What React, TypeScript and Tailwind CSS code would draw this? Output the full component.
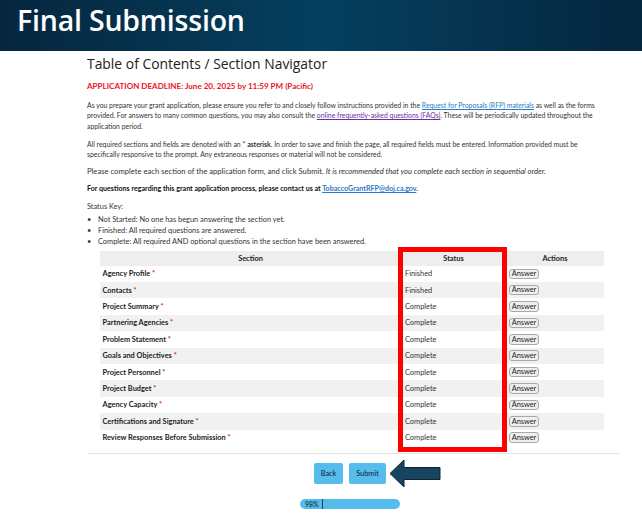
const SECTIONS = [
  { name: "Agency Profile", status: "Finished" },
  { name: "Contacts", status: "Finished" },
  { name: "Project Summary", status: "Complete" },
  { name: "Partnering Agencies", status: "Complete" },
  { name: "Problem Statement", status: "Complete" },
  { name: "Goals and Objectives", status: "Complete" },
  { name: "Project Personnel", status: "Complete" },
  { name: "Project Budget", status: "Complete" },
  { name: "Agency Capacity", status: "Complete" },
  { name: "Certifications and Signature", status: "Complete" },
  { name: "Review Responses Before Submission", status: "Complete" },
];

export default function App() {
  return (
    <div className="relative w-[642px] h-[513px] overflow-hidden bg-white font-['Lato','Liberation_Sans',sans-serif] text-[#222]">
      {/* Slide banner */}
      <header className="h-[51px] bg-gradient-to-r from-[#06263f] via-[#04405f] to-[#05263f] pl-[17px] flex items-center">
        <h1 className="font-['Open_Sans',sans-serif] text-[28.5px] font-semibold leading-none text-white tracking-[-0.2px] pb-[11px]">
          Final Submission
        </h1>
      </header>

      <main className="pl-[87px] pr-[22px]">
        <h2 className="font-['Open_Sans',sans-serif] text-[13.9px] leading-[20px] text-[#222] mt-[3px]">
          Table of Contents / Section Navigator
        </h2>
        <p className="mt-[6px] text-[8.05px] leading-[12px] font-bold text-[#e8141c]">
          APPLICATION DEADLINE: June 20, 2025 by 11:59 PM (Pacific)
        </p>

        <div className="text-[#333]">
          <div className="text-[6.87px] leading-[10.3px]">
            <p className="mt-[8px] w-[520px]">
              As you prepare your grant application, please ensure you refer to and closely follow instructions provided in the{" "}
              <a className="text-[#2a78c8] underline">Request for Proposals (RFP) materials</a> as well as the forms provided. For answers to many common questions, you may also consult the{" "}
              <a className="text-[#6b2fa0] underline">online frequently-asked questions (FAQs)</a>. These will be periodically updated throughout the application period.
            </p>
            <p className="mt-[8px] w-[520px]">
              All required sections and fields are denoted with an * <b>asterisk</b>. In order to save and finish the page, all required fields must be entered. Information provided must be specifically responsive to the prompt. Any extraneous responses or material will not be considered.
            </p>
          </div>
          <p className="mt-[7px] text-[7.65px] leading-[10.5px]">
            Please complete each section of the application form, and click Submit. <i>It is recommended that you complete each section in sequential order.</i>
          </p>
          <p className="mt-[7px] text-[7.1px] leading-[10.5px]">
            <b className="text-[#111]">For questions regarding this grant application process, please contact us at </b>
            <a className="text-[#2a78c8] underline font-bold">TobaccoGrantRFP@doj.ca.gov</a>
            <b>.</b>
          </p>
          <p className="mt-[8px] text-[7.4px] leading-[10.5px]">Status Key:</p>
          <ul className="mt-[1px] text-[7.4px] leading-[11.2px]">
            <li className="flex"><span className="w-[11px]">•</span>Not Started: No one has begun answering the section yet.</li>
            <li className="flex"><span className="w-[11px]">•</span>Finished: All required questions are answered.</li>
            <li className="flex"><span className="w-[11px]">•</span>Complete: All required AND optional questions in the section have been answered.</li>
          </ul>
        </div>

        {/* Section table */}
        <div className="ml-[13px] w-[504px] mt-[3px] text-[7.4px]">
          <div className="grid grid-cols-[301px_105px_98px] h-[15px] items-center bg-[#eeeeee] font-bold text-center">
            <span>Section</span>
            <span>Status</span>
            <span>Actions</span>
          </div>
          {SECTIONS.map((s, i) => (
            <div
              key={s.name}
              className={`grid grid-cols-[301px_105px_98px] h-[16.4px] items-center ${i % 2 === 1 ? "bg-[#f1f1f1]" : "bg-white"}`}
            >
              <span className="pl-[2.5px] font-bold text-[#222]">
                {s.name} <span className="text-[#e8141c]">*</span>
              </span>
              <span className="pl-[4px] text-[#333]">{s.status}</span>
              <span className="pl-[3px] flex">
                <button className="h-[10.5px] w-[30px] rounded-[3px] border border-[#a8a8a8] bg-[#efefef] text-[7.4px] leading-none text-[#222]">
                  Answer
                </button>
              </span>
            </div>
          ))}
        </div>
      </main>

      <div className="mt-[7px] ml-[87px] mr-[22px] border-t border-[#e4e4e4]" />

      {/* Back / Submit */}
      <div className="mt-[5px] flex pl-[314px] gap-[6px] items-center">
        <button className="h-[21px] w-[29px] rounded-[2px] bg-[#55bcec] text-[7.4px] text-[#123]">Back</button>
        <button className="h-[21px] w-[37px] rounded-[2px] bg-[#55bcec] text-[7.4px] text-[#123]">Submit</button>
        <svg width="52" height="29" viewBox="0 0 52 29" className="-ml-[3px]">
          <path d="M1 14.5 15 1v7.5h36v12H15V28Z" fill="#18445f" stroke="#0b2436" strokeWidth="1" />
        </svg>
      </div>

      {/* Progress */}
      <div className="mt-[11px] ml-[300px] w-[100px] h-[10px] rounded-full bg-[#55bcec] flex items-center text-[7px] text-[#123]">
        <span className="w-[22.5px] h-full border-r border-[#12405c] pl-[5px] leading-[10px]">98%</span>
      </div>

      {/* Red highlight drawn over the status column */}
      <div className="absolute left-[398px] top-[247px] w-[109px] h-[205px] border-[5px] border-[#ff0000]" />
    </div>
  );
}
